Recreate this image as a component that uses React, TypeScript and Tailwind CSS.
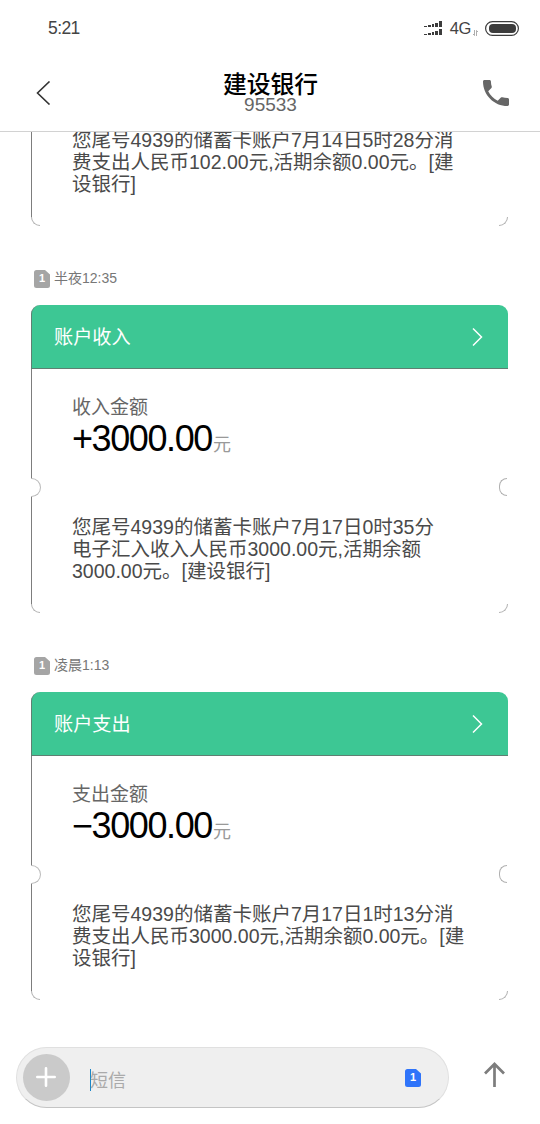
import type { ReactNode } from "react";

type Message = {
    title?: string;
    label?: string;
    amount?: string;
    time?: string;
    lines: string[];
};

const MESSAGES: Message[] = [
    {
        lines: ["您尾号4939的储蓄卡账户7月14日5时28分消", "费支出人民币102.00元,活期余额0.00元。[建", "设银行]"],
    },
    {
        time: "半夜12:35",
        title: "账户收入",
        label: "收入金额",
        amount: "+3000.00",
        lines: ["您尾号4939的储蓄卡账户7月17日0时35分", "电子汇入收入人民币3000.00元,活期余额", "3000.00元。[建设银行]"],
    },
    {
        time: "凌晨1:13",
        title: "账户支出",
        label: "支出金额",
        amount: "−3000.00",
        lines: ["您尾号4939的储蓄卡账户7月17日1时13分消", "费支出人民币3000.00元,活期余额0.00元。[建", "设银行]"],
    },
];

function SimBadge({ className }: { className: string }) {
    return (
        <span className={`relative flex h-[18px] w-4 items-center justify-center ${className}`}>
            <svg viewBox="0 0 16 18" className="absolute inset-0 h-full w-full" fill="currentColor">
                <path d="M2.5 0H11L16 4.5V15.5A2.5 2.5 0 0 1 13.5 18H2.5A2.5 2.5 0 0 1 0 15.5V2.5A2.5 2.5 0 0 1 2.5 0Z" />
            </svg>
            <span className="relative text-[11px] leading-none font-bold text-white">1</span>
        </span>
    );
}

function StatusBar() {
    return (
        <div className="flex h-[57px] shrink-0 items-center justify-between pr-[21px] pl-[48px] text-[#444]">
            <span className="pt-px text-[17.5px] leading-none tracking-[-0.6px]">5:21</span>
            <div className="flex items-center">
                <svg width="19" height="15" viewBox="0 0 19 15" fill="#3c3c3c">
                    <path d="M0 5h3v1H0zM4 4h3v2H4zM8 3h2v3H8zM11 2h3v4h-3zM15 0h3v6h-3z" />
                    <path d="M0 13h3v1H0zM4 12h3v2H4zM8 11h2v3H8zM11 10h3v4h-3zM15 8h3v6h-3z" />
                </svg>
                <span className="ml-[7px] text-[16.5px] leading-none tracking-[-0.4px]">4G</span>
                <svg width="7" height="8" viewBox="0 0 7 8" className="mt-2 ml-px" fill="none" stroke="#999">
                    <path d="M2.5 1V6.5L1 5M4.5 7V1.5L6 3" strokeWidth="0.8" />
                </svg>
                <svg width="34" height="15" viewBox="0 0 34 15" className="ml-[6px]">
                    <rect x="0.6" y="0.6" width="32.8" height="13.8" rx="6.9" fill="none" stroke="#3c3c3c" strokeWidth="1.2" />
                    <rect x="4" y="3" width="27" height="9" rx="4" fill="#3c3c3c" />
                </svg>
            </div>
        </div>
    );
}

function Header() {
    return (
        <header className="flex h-[75px] shrink-0 items-center justify-between border-b border-[#d2d2d2] pr-[31px] pb-[2px] pl-[36px]">
            <svg width="22" height="24" viewBox="0 0 22 24" fill="none" stroke="#333" strokeWidth="1.6">
                <path d="M13.5 .5 1.5 12 13.5 23.500" />
            </svg>
            <div className="flex flex-col items-center">
                <h1 className="text-[23.8px] leading-[23px] font-medium text-black">建设银行</h1>
                <p className="text-[19px] leading-[18px] text-[#666]">95533</p>
            </div>
            <svg width="26" height="26" viewBox="3 3 18 18" fill="#666">
                <path d="M6.62 10.79c1.44 2.83 3.76 5.14 6.59 6.59l2.2-2.2c.27-.27.67-.36 1.02-.24 1.12.37 2.33.57 3.57.57.55 0 1 .45 1 1V20c0 .55-.45 1-1 1-9.39 0-17-7.61-17-17 0-.55.45-1 1-1h3.5c.55 0 1 .45 1 1 0 1.25.2 2.45.57 3.57.11.35.03.74-.25 1.02l-2.2 2.2z" />
            </svg>
        </header>
    );
}

function CardBody({ children }: { children: ReactNode }) {
    return (
        <>
            <div className="border-l border-[#7d7d7d] pl-10">{children}</div>
            <div className="flex h-[9px] justify-between">
                <span className="w-[9px] rounded-bl-[9px] border-b border-l border-[#b0b0b0]" />
                <span className="w-[9px] rounded-br-[9px] border-r border-b border-[#b0b0b0]" />
            </div>
        </>
    );
}

function MessageCard({ message }: { message: Message }) {
    return (
        <article className="relative shrink-0">
            {message.title && (
                <div className="flex h-16 items-center justify-between rounded-t-[9px] border-b border-l border-[#5f7f72] bg-[#3dc794] pr-[25px] pl-[22px]">
                    <h2 className="pt-[2px] text-[19.2px] leading-none text-white">{message.title}</h2>
                    <svg width="11" height="18" viewBox="0 0 11 18" fill="none" stroke="#fff" strokeWidth="1.5">
                        <path d="M1 .5 9.5 9 1 17.5" />
                    </svg>
                </div>
            )}
            <CardBody>
                {message.amount && (
                    <div className="h-[147px] pt-[28px]">
                        <p className="text-[19px] leading-[22px] text-[#666]">{message.label}</p>
                        <p className="flex items-baseline leading-[40px]">
                            <span className="text-[36px] tracking-[-1.4px] text-black">{message.amount}</span>
                            <span className="ml-px text-[18px] text-[#999]">元</span>
                        </p>
                    </div>
                )}
                <div className="h-[88px] text-[19.5px] leading-[22px] whitespace-nowrap text-[#4a4a4a]">
                    {message.lines.map((line) => (
                        <p key={line}>{line}</p>
                    ))}
                </div>
            </CardBody>
            {message.amount && (
                <>
                    <span className="absolute top-[173px] left-0 h-[19px] w-[10px] rounded-r-full border border-l-0 border-[#bbb] bg-white" />
                    <span className="absolute top-[173px] right-px h-[18px] w-[8px] rounded-l-full border border-r-0 border-[#b0b0b0] bg-white" />
                </>
            )}
        </article>
    );
}

function Composer() {
    return (
        <footer className="flex h-[77px] shrink-0 items-start pl-[16px]">
            <div className="flex h-[61px] w-[433px] items-center rounded-full border border-[#e0e0e0] border-b-[#c4c4c4] bg-[#efefef] pr-[27px] pl-[6px]">
                <button className="flex h-[47px] w-[47px] items-center justify-center rounded-full bg-[#cacaca] pr-px pb-px">
                    <svg width="20" height="20" viewBox="0 0 20 20" stroke="#fff" strokeWidth="2.6" strokeLinecap="round">
                        <path d="M10 1.3V18.7M1.3 10H18.7" />
                    </svg>
                </button>
                <span className="mt-[5px] ml-[20px] h-[22px] w-px bg-[#1b86c8]" />
                <span className="mt-[7px] -ml-px text-[18px] leading-none text-[#aaa]">短信</span>
                <SimBadge className="ml-auto text-[#2f74fa]" />
            </div>
            <svg width="22" height="26" viewBox="0 0 22 26" className="mt-[14px] ml-[34px]" fill="none" stroke="#7d7d7d" strokeWidth="2.7">
                <path d="M11.5 26V3M2 12.5 11.5 3 21 12.5" />
            </svg>
        </footer>
    );
}

export default function App() {
    return (
        <main className="flex h-[1124px] w-[540px] flex-col overflow-hidden bg-white font-['Liberation_Sans','Noto_Sans_CJK_SC',sans-serif]">
            <StatusBar />
            <Header />
            <section className="flex min-h-0 flex-1 flex-col justify-end overflow-hidden pr-8 pb-[47px] pl-[31px]">
                {MESSAGES.map((message, i) => (
                    <div key={i} className="shrink-0">
                        {message.time && (
                            <div className="flex h-[79px] items-center gap-1 pt-[26px] pl-[3px]">
                                <SimBadge className="text-[#a5a5a5]" />
                                <time className="pb-px text-[14px] leading-none text-[#777]">{message.time}</time>
                            </div>
                        )}
                        <MessageCard message={message} />
                    </div>
                ))}
            </section>
            <Composer />
        </main>
    );
}
